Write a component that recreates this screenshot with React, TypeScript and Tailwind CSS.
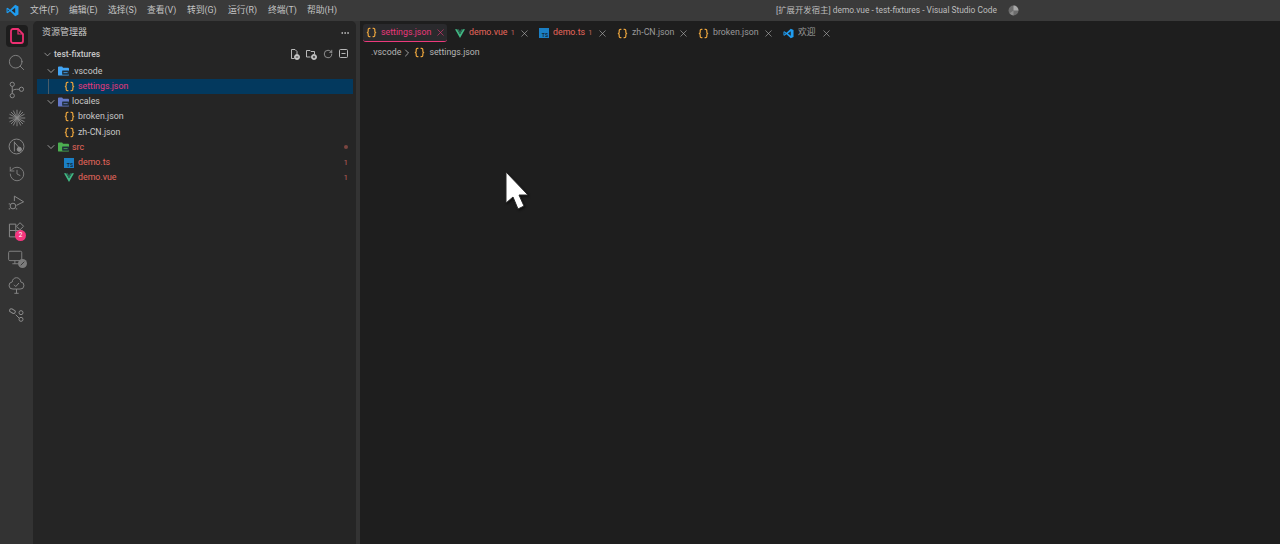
import { ChevronDown, ChevronRight, X, Search, RotateCw, MoreHorizontal, History } from "lucide-react";

const font = "font-['Roboto','Noto_Sans_CJK_SC',sans-serif]";
const menus = [
  ["文件(F)", "w-[39px]"],
  ["编辑(E)", "w-[39px]"],
  ["选择(S)", "w-[39px]"],
  ["查看(V)", "w-[40px]"],
  ["转到(G)", "w-[41px]"],
  ["运行(R)", "w-[40px]"],
  ["终端(T)", "w-[39px]"],
  ["帮助(H)", "w-[40px]"],
];

function VsLogo({ size = 13 }: { size?: number }) {
  return (
    <svg width={size} height={size} viewBox="0 0 24 24" className="shrink-0">
      <path d="M17 1.5 23 4.5V19.5L17 22.5 7.5 13.5 3 17 1 16V8L3 7 7.5 10.5Z" fill="#1f9cf0" />
      <path d="M17 7 10.5 12 17 17Z" fill="#24292f" />
      <path d="M3 9.5V14.5L5.5 12Z" fill="#24292f" />
    </svg>
  );
}

function JsonIcon() {
  return (
    <svg width="11" height="11" viewBox="0 0 20 20" fill="none" stroke="#e8a33d" strokeWidth="2.2" className="shrink-0">
      <path d="M8 2.5H6C4.500 2.500 4 3.500 4 4.500V7.500C4 9 3 10 1.500 10 3 10 4 11 4 12.500V15.500C4 16.500 4.500 17.500 6 17.500H8" />
      <path d="M12 2.500H14C15.500 2.500 16 3.500 16 4.500V7.500C16 9 17 10 18.500 10 17 10 16 11 16 12.500V15.500C16 16.500 15.500 17.500 14 17.500H12" />
    </svg>
  );
}

function VueIcon() {
  return (
    <svg width="10" height="9" viewBox="0 0 24 21" className="shrink-0">
      <path d="M0 0 12 21 24 0H19L12 12.5 5 0Z" fill="#41b883" />
      <path d="M5 0 12 12.5 19 0H15L12 5.5 9 0Z" fill="#2c6a57" />
    </svg>
  );
}

function TsIcon() {
  return (
    <span className="w-[10px] h-[10px] bg-[#1b7fc4] shrink-0 flex items-end justify-end text-[5px] leading-[6px] font-bold text-[#12283a] pr-px">TS</span>
  );
}

function FolderIcon({ color }: { color: string }) {
  return (
    <svg width="11" height="10" viewBox="0 0 24 20" className="shrink-0">
      <path d="M0 2a2 2 0 0 1 2-2h7l2 3h11a2 2 0 0 1 2 2v13a2 2 0 0 1-2 2H2a2 2 0 0 1-2-2Z" fill={color} />
      <rect x="9" y="9" width="15" height="9" rx="1" fill="#20303c" />
      <path d="M12 13.500h9" stroke={color} strokeWidth="1.8" fill="none" />
    </svg>
  );
}

function TreeRow({ indent, active, chevron, icon, name, nameClass, right }: { indent: string; active?: boolean; chevron?: boolean; icon: React.ReactNode; name: string; nameClass: string; right?: React.ReactNode }) {
  return (
    <div className={`h-[15.25px] flex items-center text-[8.8px] relative ml-[4px] mr-[3px] whitespace-nowrap ${indent} ${active ? "bg-[#03395e]" : ""}`}>
      {active && <span className="absolute left-[11px] top-0 bottom-0 w-px bg-[#4a5c68]" />}
      {chevron && <ChevronDown size={12} strokeWidth={1.5} className="text-[#c0c0c0] mr-px shrink-0" />}
      {icon}
      <span className={nameClass}>{name}</span>
      {right && <span className="ml-auto mr-[5px] text-[#b5625a] text-[8px] leading-none">{right}</span>}
    </div>
  );
}

function Tab({ icon, name, nameClass, badge, active, width }: { icon: React.ReactNode; name: string; nameClass: string; badge?: string; active?: boolean; width: string }) {
  return (
    <div className={`h-[18px] flex items-center rounded-[3px] pl-[3px] shrink-0 text-[8.8px] whitespace-nowrap ${width} ${active ? "bg-[#2a2a2d] border-b border-[#ec3a7c] mr-[5px]" : ""}`}>
      {icon}
      <span className={`ml-[4px] ${nameClass}`}>{name}</span>
      {badge && <span className="ml-[3px] text-[8px] text-[#b5625a]">{badge}</span>}
      <X size={11} strokeWidth={1.3} className={`ml-auto ${active ? "mr-[1px] text-[#ec3a7c]" : "mr-[6.5px] text-[#b8b8b8]"}`} />
    </div>
  );
}

function Slot({ children, first }: { children: React.ReactNode; first?: boolean }) {
  return <div className={`${first ? "h-[27px]" : "h-[28px]"} w-full flex items-center justify-center shrink-0`}>{children}</div>;
}

export default function App() {
  return (
    <div className={`w-[1280px] h-[544px] overflow-hidden flex flex-col relative bg-[#333333] ${font}`}>
      <div className="h-[21px] bg-[#3a3a3a] flex items-center shrink-0 text-[8.8px] text-[#c4c4c4] whitespace-nowrap">
        <div className="w-[30px] pl-[6px] shrink-0"><VsLogo /></div>
        {menus.map(([m, w]) => <span key={m} className={w}>{m}</span>)}
        <span className="ml-[429px] w-[222px] text-[8.4px] text-[#bdbdbd]">[扩展开发宿主] demo.vue - test-fixtures - Visual Studio Code</span>
        <svg width="11" height="11" viewBox="0 0 20 20" className="ml-[10px]">
          <circle cx="10" cy="10" r="9" fill="#6d6d6d" />
          <path d="M10 1A9 9 0 0 1 19 10H10Z" fill="#a8a8a8" />
          <path d="M10 10V19A9 9 0 0 1 3 15Z" fill="#8e8e8e" />
        </svg>
      </div>
      <div className="flex-1 flex min-h-0">
        <div className="w-[33px] shrink-0 flex flex-col items-center text-[#8a8a8a] bg-[#333333]">
          <Slot first>
            <div className="w-[22px] h-[22px] rounded-[4px] bg-[#1d1d1d] flex items-center justify-center mt-[3px]">
              <svg width="14" height="16" viewBox="0 0 14 16" fill="none" stroke="#ee2f72" strokeWidth="1.8">
                <path d="M1 3a2 2 0 0 1 2-2h5l5 5v7a2 2 0 0 1-2 2H3a2 2 0 0 1-2-2Z" />
                <path d="M8 1v5h5" strokeWidth="1.2" />
              </svg>
            </div>
          </Slot>
          <Slot><Search size={19} strokeWidth={1.1} /></Slot>
          <Slot>
            <svg width="17" height="18" viewBox="0 0 24 24" fill="none" stroke="currentColor" strokeWidth="1.4">
              <circle cx="6" cy="4" r="3" />
              <circle cx="6" cy="20" r="3" />
              <circle cx="19" cy="11" r="3" />
              <path d="M6 7v10M6 15c0-3 3-4 6-4h4" />
            </svg>
          </Slot>
          <Slot>
            <svg width="18" height="18" viewBox="0 0 24 24" stroke="currentColor" strokeWidth="1.2">
              <path d="M12 1v22M1 12h22M4 4l16 16M20 4 4 20M7 2l10 20M17 2 7 22M2 7l20 10M22 7 2 17" />
            </svg>
          </Slot>
          <Slot>
            <svg width="17" height="17" viewBox="0 0 24 24" fill="none" stroke="currentColor" strokeWidth="1.3">
              <circle cx="12" cy="12" r="10.500" />
              <path d="M9 5v14M9 6l7 8" />
              <circle cx="16" cy="16" r="3" fill="currentColor" />
            </svg>
          </Slot>
          <Slot><History size={18} strokeWidth={1.1} /></Slot>
          <Slot>
            <svg width="17" height="17" viewBox="0 0 24 24" fill="none" stroke="currentColor" strokeWidth="1.4">
              <path d="M9 3 22 11 12 16" />
              <circle cx="7" cy="17" r="4" />
              <path d="M9 3v7M1 14h2M1 21h2M11 21h2" />
            </svg>
          </Slot>
          <Slot>
            <div className="relative w-[17px] h-[17px]">
              <svg width="17" height="17" viewBox="0 0 24 24" fill="none" stroke="currentColor" strokeWidth="1.4">
                <path d="M2 3h9v9H2ZM2 12h9v9H2ZM11 12h9v9" />
                <path d="M17 1l5 5-5 5-5-5Z" />
              </svg>
              <span className="absolute left-[7px] top-[8px] w-[11px] h-[11px] rounded-full bg-[#f5367f] text-white text-[6.5px] leading-[11px] text-center">2</span>
            </div>
          </Slot>
          <Slot>
            <div className="relative w-[17px] h-[17px]">
              <svg width="15" height="15" viewBox="0 0 24 24" fill="none" stroke="currentColor" strokeWidth="1.4">
                <rect x="1" y="2" width="21" height="15" rx="2" />
                <path d="M7 22h9M11 17v5" />
              </svg>
              <svg width="9" height="9" viewBox="0 0 10 10" className="absolute right-[-2px] bottom-[-1px]">
                <circle cx="5" cy="5" r="5" fill="#7c7c7c" />
                <path d="M3 7 7 3" stroke="#333333" strokeWidth="1" />
              </svg>
            </div>
          </Slot>
          <Slot>
            <svg width="17" height="17" viewBox="0 0 24 24" fill="none" stroke="currentColor" strokeWidth="1.3" className="-mt-[1px]">
              <path d="M12 17H7a5 5 0 0 1-1-10 6 6 0 0 1 12 0 5 5 0 0 1-1 10h-5v6M9 23h6" />
              <path d="M8.500 11l2.500 2.500 4.500-5" />
            </svg>
          </Slot>
          <Slot>
            <svg width="16" height="16" viewBox="0 0 24 24" fill="none" stroke="currentColor" strokeWidth="1.5" className="-mt-[1px]">
              <rect x="1" y="5" width="9" height="5" rx="2.500" transform="rotate(30 5 7)" />
              <circle cx="18" cy="10" r="3" />
              <circle cx="18" cy="20" r="3" />
              <path d="M10 13l5 5" />
            </svg>
          </Slot>
        </div>

        <div className="w-[323px] shrink-0 bg-[#252525] rounded-t-[5px] text-[#c8c8c8] flex flex-col">
          <div className="h-[23px] flex items-center pl-[9px] pr-[6px] text-[9px] shrink-0">
            <span>资源管理器</span>
            <MoreHorizontal size={10} className="ml-auto" />
          </div>
          <div className="h-[16px] flex items-center pl-[9px] pr-[7px] mt-[2px] mb-[1.5px] shrink-0">
            <ChevronDown size={11} strokeWidth={1.4} className="mr-px" />
            <span className="text-[8.5px] font-medium">test-fixtures</span>
            <div className="ml-auto flex items-center gap-[6px]">
              <svg width="10" height="11" viewBox="0 0 20 22" fill="none" stroke="currentColor" strokeWidth="1.8"><path d="M3 1h7l4 4v5M3 1v18h6" /><circle cx="14" cy="16" r="5" fill="currentColor" /><path d="M11.500 16h5" stroke="#252525" /></svg>
              <svg width="11" height="11" viewBox="0 0 22 22" fill="none" stroke="currentColor" strokeWidth="1.8"><path d="M1 3h7l2 2h7v5M1 3v13h8" /><circle cx="16" cy="16" r="5" fill="currentColor" /><path d="M13.500 16h5M16 13.500v5" stroke="#252525" /></svg>
              <RotateCw size={10} strokeWidth={1.5} />
              <svg width="10" height="10" viewBox="0 0 20 20" fill="none" stroke="currentColor" strokeWidth="1.8"><rect x="1" y="1" width="16" height="16" rx="2" /><path d="M5 9h8" /></svg>
            </div>
          </div>
          <TreeRow indent="pl-[8px]" chevron icon={<FolderIcon color="#42a5f5" />} name=".vscode" nameClass="text-[#c8c8c8] ml-[3px]" />
          <TreeRow indent="pl-[27px]" active icon={<JsonIcon />} name="settings.json" nameClass="text-[#e9387c] ml-[3px]" />
          <TreeRow indent="pl-[8px]" chevron icon={<FolderIcon color="#6478c8" />} name="locales" nameClass="text-[#c8c8c8] ml-[3px]" />
          <TreeRow indent="pl-[27px]" icon={<JsonIcon />} name="broken.json" nameClass="text-[#c8c8c8] ml-[3px]" />
          <TreeRow indent="pl-[27px]" icon={<JsonIcon />} name="zh-CN.json" nameClass="text-[#c8c8c8] ml-[3px]" />
          <TreeRow indent="pl-[8px]" chevron icon={<FolderIcon color="#4caf50" />} name="src" nameClass="text-[#e8675c] ml-[3px]" right={<span className="block w-[4px] h-[4px] rounded-full bg-[#7a4540]" />} />
          <TreeRow indent="pl-[27px]" icon={<TsIcon />} name="demo.ts" nameClass="text-[#e8675c] ml-[4px]" right="1" />
          <TreeRow indent="pl-[27px]" icon={<VueIcon />} name="demo.vue" nameClass="text-[#e8675c] ml-[4px]" right="1" />
        </div>

        <div className="w-[4px] shrink-0 bg-[#333333]" />

        <div className="flex-1 bg-[#1e1e1e] flex flex-col min-w-0">
          <div className="flex items-center pl-[3px] shrink-0 mt-[3px]">
            <Tab active width="w-[84px]" icon={<JsonIcon />} name="settings.json" nameClass="text-[#e9387c]" />
            <Tab width="w-[84px]" icon={<VueIcon />} name="demo.vue" nameClass="text-[#e8675c]" badge="1" />
            <Tab width="w-[78px]" icon={<TsIcon />} name="demo.ts" nameClass="text-[#e8675c]" badge="1" />
            <Tab width="w-[81px]" icon={<JsonIcon />} name="zh-CN.json" nameClass="text-[#9a9a9a]" />
            <Tab width="w-[85px]" icon={<JsonIcon />} name="broken.json" nameClass="text-[#9a9a9a]" />
            <Tab width="w-[58px]" icon={<VsLogo size={11} />} name="欢迎" nameClass="text-[#9a9a9a]" />
          </div>
          <div className="h-[17px] flex items-center pl-[11px] text-[8.8px] text-[#b5b5b5] shrink-0 mt-[2px] whitespace-nowrap">
            <span>.vscode</span>
            <ChevronRight size={12} strokeWidth={1.5} className="mr-[1px] text-[#c8c8c8]" />
            <JsonIcon />
            <span className="ml-[4px]">settings.json</span>
          </div>
        </div>
      </div>
      <svg width="26" height="40" viewBox="0 0 26 40" className="absolute left-[504px] top-[171px] drop-shadow-[1px_1px_1px_rgba(0,0,0,0.6)]">
        <path d="M2 1V32L9 26 14 38 20 35 15 24H24Z" fill="#ffffff" stroke="#2a2a2a" strokeWidth="1" />
      </svg>
    </div>
  );
}
